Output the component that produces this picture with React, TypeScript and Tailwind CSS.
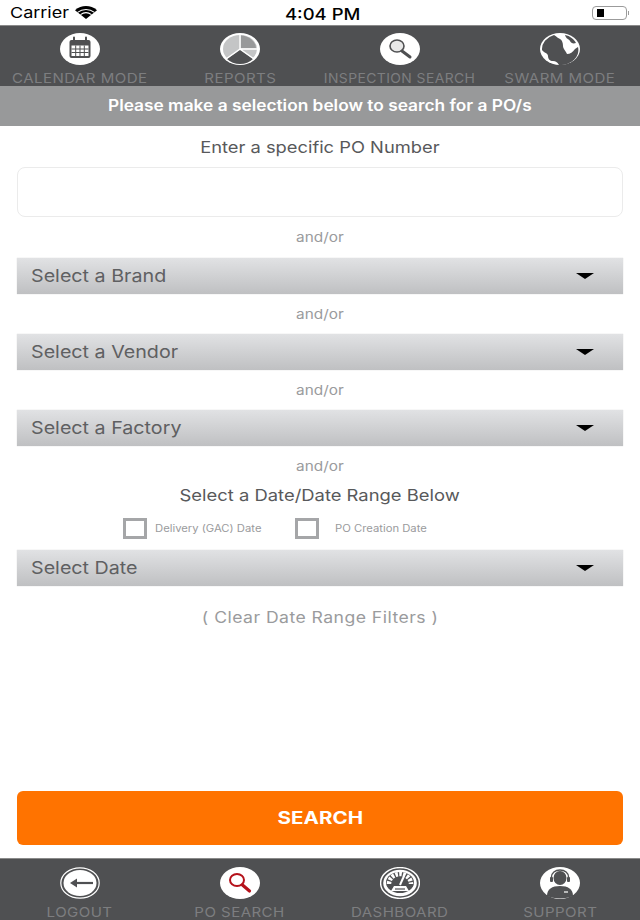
// App.tsx
import React from 'react';

const CalendarIcon = () => (
  <svg viewBox="0 0 40 32" className="h-8 w-10">
    <ellipse cx="20" cy="16" rx="20" ry="16" fill="#fff" />
    <rect x="9.5" y="7" width="21" height="18" rx="2" fill="#4f5052" />
    <path d="M14 4.5v5M26 4.5v5" stroke="#4f5052" strokeWidth="2" strokeLinecap="round" />
    <path d="M11.500 12.500h17v10.500h-17z" fill="#fff" />
    <path d="M11.500 16h17M11.500 19.500h17M15.700 12.500v10.500M20 12.500v10.500M24.300 12.500v10.500" stroke="#4f5052" strokeWidth="1" />
  </svg>
);

const ReportsIcon = () => (
  <svg viewBox="0 0 40 32" className="h-8 w-10">
    <ellipse cx="20" cy="16" rx="20" ry="16" fill="#fff" />
    <ellipse cx="20" cy="16" rx="17" ry="14" fill="#c4c5c6" />
    <path d="M21 2.500a16 13 0 0 1 15 12.500H21z" fill="#98999a" />
    <path d="M20 17l-13 9a17 14 0 0 0 26 0z" fill="#4f5052" />
    <path d="M20 16V2M20 16h17M20 16l-14 10M20 16l14 10" stroke="#fff" strokeWidth="1.400" />
  </svg>
);

const InspectionIcon = () => (
  <svg viewBox="0 0 40 32" className="h-8 w-10">
    <ellipse cx="20" cy="16" rx="20" ry="16" fill="#fff" />
    <ellipse cx="17" cy="13" rx="7" ry="6" fill="#e8e8e8" stroke="#4f5052" strokeWidth="1.600" />
    <path d="M22 18l8 6" stroke="#4f5052" strokeWidth="3" strokeLinecap="round" />
  </svg>
);

const SwarmIcon = () => (
  <svg viewBox="0 0 40 32" className="h-8 w-10">
    <ellipse cx="20" cy="16" rx="20" ry="16" fill="#fff" />
    <path d="M14 2c3 2 4 3 6 4s3 4 3 7 3 5 4 8c3 0 6-2 8-5l3-2a18 15 0 0 1-19 18c-2-3-3-4-6-4s-5-2-5-5-4-3-6-6A18 15 0 0 1 14 2z" fill="#4f5052" />
    <path d="M25 2c5 1 9 4 11 8-3 1-5 0-6-2s-4-2-5-6z" fill="#4f5052" />
  </svg>
);

const LogoutIcon = () => (
  <svg viewBox="0 0 40 32" className="h-8 w-10">
    <ellipse cx="20" cy="16" rx="19.200" ry="15.200" fill="none" stroke="#fff" strokeWidth="1.200" />
    <ellipse cx="20" cy="16" rx="16.500" ry="13" fill="#fff" />
    <path d="M33 16H17" stroke="#4f5052" strokeWidth="2.200" />
    <path d="M17 11.500v9L10 16z" fill="#4f5052" />
  </svg>
);

const PoSearchIcon = () => (
  <svg viewBox="0 0 40 32" className="h-8 w-10">
    <ellipse cx="20" cy="16" rx="20" ry="16" fill="#fff" />
    <ellipse cx="17" cy="13" rx="7" ry="6" fill="#fff" stroke="#b5121b" strokeWidth="2" />
    <path d="M22.500 18l7 6" stroke="#b5121b" strokeWidth="3.200" strokeLinecap="round" />
  </svg>
);

const DashboardIcon = () => (
  <svg viewBox="0 0 40 32" className="h-8 w-10">
    <ellipse cx="20" cy="16" rx="19.400" ry="15.400" fill="none" stroke="#fff" strokeWidth="1.400" />
    <ellipse cx="20" cy="16" rx="16.800" ry="13.200" fill="#fff" />
    <ellipse cx="20" cy="15.500" rx="14" ry="10.500" fill="#4f5052" />
    <path d="M9 17a11 10 0 0 1 22 0" fill="none" stroke="#fff" strokeWidth="4.500" strokeDasharray="2.600 1.300" />
    <path d="M20 18l4-9" stroke="#fff" strokeWidth="2" />
    <path d="M14 19h12l3 5H11z" fill="#fff" />
    <path d="M15 22h10" stroke="#4f5052" strokeWidth="1.200" />
  </svg>
);

const SupportIcon = () => (
  <svg viewBox="0 0 40 32" className="h-8 w-10">
    <ellipse cx="20" cy="16" rx="20" ry="16" fill="#fff" />
    <path d="M7 29c0-7 5-10 13-10s13 3 13 10c-3 1.500-8 2.500-13 2.500s-10-1-13-2.500z" fill="#4f5052" />
    <ellipse cx="20" cy="11" rx="6.500" ry="7" fill="#4f5052" />
    <path d="M11.500 13V10c0-4 3.500-7 8.500-7s8.500 3 8.500 7v3" fill="none" stroke="#4f5052" strokeWidth="1.400" />
    <rect x="10" y="10" width="3" height="5" rx="1" fill="#4f5052" />
    <rect x="27" y="10" width="3" height="5" rx="1" fill="#4f5052" />
    <path d="M24 25h4" stroke="#fff" strokeWidth="1.200" />
  </svg>
);

const NavItem = ({ icon, label, tight }: { icon: React.ReactNode; label: string; tight?: boolean }) => (
  <div className="flex flex-col items-center">
    {icon}
    <span
      className={`mt-[3px] inline-block whitespace-nowrap text-[13.500px] leading-[20px] tracking-[0.4px] text-[#7d7e80] ${
        tight ? 'scale-x-[1.03]' : 'scale-x-[1.115]'
      }`}
    >
      {label}
    </span>
  </div>
);

const SelectBar = ({ label }: { label: string }) => (
  <div className="flex h-[36px] items-center justify-between bg-gradient-to-b from-[#e1e2e4] to-[#bfc0c2] pl-[14px] pr-[29px] shadow-[0_0_1px_#cfcfcf]">
    <span className="inline-block origin-left scale-x-[1.125] text-[17.500px] text-[#5f6062]">{label}</span>
    <span className="h-0 w-0 border-x-[9px] border-t-[6px] border-x-transparent border-t-black" />
  </div>
);

const AndOr = ({ className }: { className: string }) => (
  <p className={`text-center text-[13.500px] leading-[20px] text-[#9a9b9d] ${className}`}>
    <span className="inline-block scale-x-[1.14]">and/or</span>
  </p>
);

const DateOption = ({ label, labelClass }: { label: string; labelClass: string }) => (
  <div className="flex items-center">
    <span className="h-[21px] w-[24px] border-[3px] border-[#a5a6a8] bg-white" />
    <span className={`inline-block origin-left scale-x-[1.126] whitespace-nowrap text-[10px] text-[#9a9b9d] ${labelClass}`}>{label}</span>
  </div>
);

export default function App() {
  return (
    <div className="flex h-[920px] w-[640px] flex-col overflow-hidden bg-white font-['Inter',sans-serif]">
      {/* status bar */}
      <div className="relative flex h-[25px] items-center justify-between pl-[10px] pr-[11px] text-black">
        <div className="flex items-center">
          <span className="mt-[2px] inline-block origin-left scale-x-[1.2] text-[15px]">Carrier</span>
          <svg viewBox="0 0 24 14" className="ml-[16px] h-[13px] w-[22px]">
            <path d="M12 14L0 4.500C7-1.500 17-1.500 24 4.500z" fill="#000" />
            <path d="M2.800 6.900c5.400-4.300 13-4.300 18.400 0M6 9.300c3.600-2.600 8.400-2.600 12 0" fill="none" stroke="#fff" strokeWidth="1.100" />
          </svg>
        </div>
        <span className="absolute left-[285px] top-[3px] inline-block origin-left scale-x-[1.19] text-[15.500px] font-medium">4:04 PM</span>
        <div className="flex items-center">
          <div className="flex h-[14px] w-[35px] items-center rounded-[4px] border border-[#9b9b9b] p-[2px] pl-[4px]">
            <div className="h-full w-[7px] bg-black" />
          </div>
          <div className="ml-[1px] h-[4px] w-[1px] bg-[#9b9b9b]" />
        </div>
      </div>

      {/* top nav */}
      <div className="grid h-[61px] grid-cols-4 border-t border-[#8a8a8a] bg-[#4f5052] pt-[7px]">
        <NavItem icon={<CalendarIcon />} label="CALENDAR MODE" />
        <NavItem icon={<ReportsIcon />} label="REPORTS" />
        <NavItem icon={<InspectionIcon />} label="INSPECTION SEARCH" tight />
        <NavItem icon={<SwarmIcon />} label="SWARM MODE" />
      </div>

      <div className="flex h-[40px] items-center justify-center bg-[#98999a] text-[15.500px] font-semibold text-white">
        <span className="inline-block scale-x-[1.116] whitespace-nowrap">Please make a selection below to search for a PO/s</span>
      </div>

      {/* form */}
      <div className="flex flex-1 flex-col px-[17px]">
        <p className="mt-[10px] text-center text-[16.500px] leading-[22px] text-[#58595b]">
          <span className="inline-block scale-x-[1.11]">Enter a specific PO Number</span>
        </p>
        <div className="mt-[9px] h-[50px] rounded-[8px] border border-[#ebebeb]" />
        <AndOr className="mt-[10px]" />
        <div className="mt-[11px]"><SelectBar label="Select a Brand" /></div>
        <AndOr className="mt-[10px]" />
        <div className="mt-[10px]"><SelectBar label="Select a Vendor" /></div>
        <AndOr className="mt-[10px]" />
        <div className="mt-[10px]"><SelectBar label="Select a Factory" /></div>
        <AndOr className="mt-[10px]" />
        <p className="mt-[8px] text-center text-[16.500px] leading-[22px] text-[#58595b]">
          <span className="inline-block scale-x-[1.115]">Select a Date/Date Range Below</span>
        </p>
        <div className="mt-[12px] flex h-[21px] pl-[106px]">
          <DateOption label="Delivery (GAC) Date" labelClass="ml-[8px]" />
          <div className="ml-[45px]"><DateOption label="PO Creation Date" labelClass="ml-[16px]" /></div>
        </div>
        <div className="mt-[11px]"><SelectBar label="Select Date" /></div>
        <p className="mt-[22px] text-center text-[15.500px] leading-[20px] tracking-[0.4px] text-[#9a9b9d]">
          <span className="inline-block scale-x-[1.136]">( Clear Date Range Filters )</span>
        </p>
        <div className="mt-auto mb-[13px] flex h-[54px] items-center justify-center rounded-[6px] bg-[#ff7300] pt-[1px] text-[17px] font-bold text-white">
          <span className="inline-block scale-x-[1.21]">SEARCH</span>
        </div>
      </div>

      {/* bottom nav */}
      <div className="grid h-[62px] grid-cols-4 border-t border-[#8a8a8a] bg-[#4f5052] pt-[8px]">
        <NavItem icon={<LogoutIcon />} label="LOGOUT" />
        <NavItem icon={<PoSearchIcon />} label="PO SEARCH" />
        <NavItem icon={<DashboardIcon />} label="DASHBOARD" />
        <NavItem icon={<SupportIcon />} label="SUPPORT" />
      </div>
    </div>
  );
}
